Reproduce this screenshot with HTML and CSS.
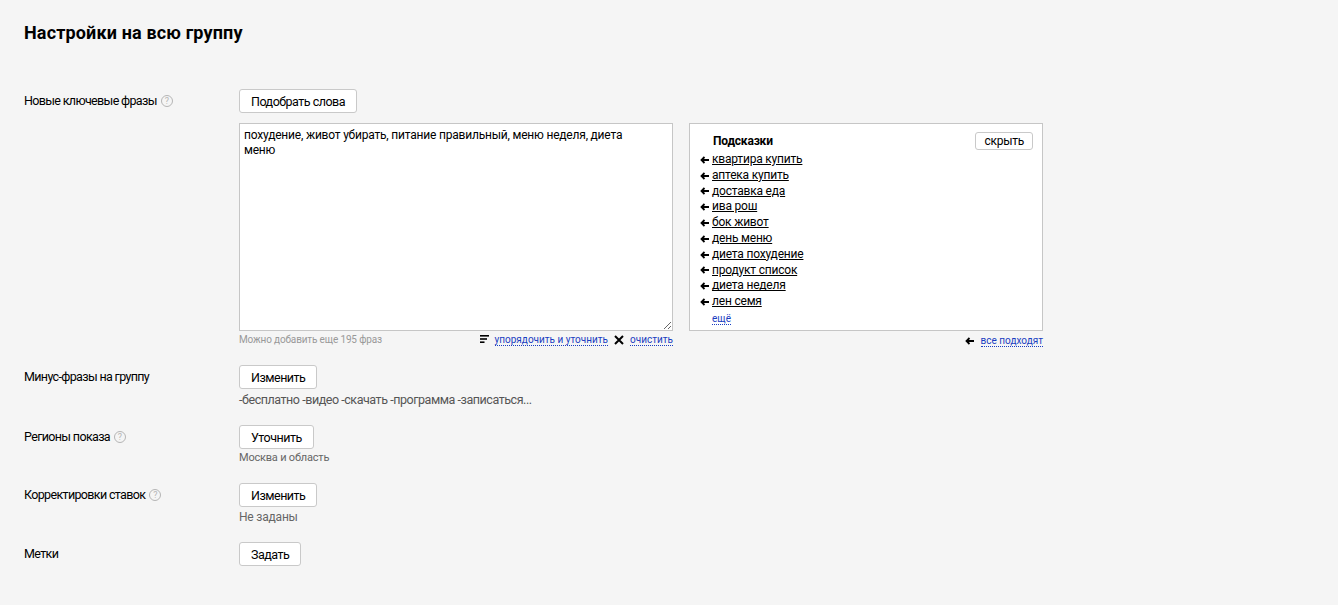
FILE: index.html
```html
<!DOCTYPE html>
<html lang="ru">
<head>
<meta charset="utf-8">
<title>Настройки на всю группу</title>
<link rel="stylesheet" href="styles.css">
</head>
<body>
<div class="page">
  <h1 class="title">Настройки на всю группу</h1>
  <div class="form">
    <div class="row">
      <div class="label">Новые ключевые фразы <span class="help">?</span></div>
      <div class="control">
        <button class="btn">Подобрать слова</button>
        <div class="editor">
          <div class="phrases">
            <textarea class="area">похудение, живот убирать, питание правильный, меню неделя, диета
меню</textarea>
            <div class="area-foot">
              <span class="muted">Можно добавить еще 195 фраз</span>
              <span class="actions">
                <svg class="ico" width="9" height="9" viewBox="0 0 9 9"><rect x="0" y="0" width="9" height="1.6" fill="#000"/><rect x="0" y="3.2" width="7" height="1.6" fill="#000"/><rect x="0" y="6.4" width="4.5" height="1.6" fill="#000"/></svg>
                <a class="pseudo">упорядочить и уточнить</a>
                <svg class="ico x" width="10" height="10" viewBox="0 0 10 10"><path d="M1 1L9 9M9 1L1 9" stroke="#000" stroke-width="2"/></svg>
                <a class="pseudo">очистить</a>
              </span>
            </div>
          </div>
          <div class="hints-col">
            <div class="hints">
              <div class="hints-head">
                <span class="hints-title">Подсказки</span>
                <button class="btn small">скрыть</button>
              </div>
              <ul class="hint-list">
                <li><svg class="arr" width="9" height="8" viewBox="0 0 9 8"><path d="M9 4H2M4.5 1L1.5 4L4.5 7" stroke="#000" stroke-width="1.8" fill="none"/></svg><a>квартира купить</a></li>
                <li><svg class="arr" width="9" height="8" viewBox="0 0 9 8"><path d="M9 4H2M4.5 1L1.5 4L4.5 7" stroke="#000" stroke-width="1.8" fill="none"/></svg><a>аптека купить</a></li>
                <li><svg class="arr" width="9" height="8" viewBox="0 0 9 8"><path d="M9 4H2M4.5 1L1.5 4L4.5 7" stroke="#000" stroke-width="1.8" fill="none"/></svg><a>доставка еда</a></li>
                <li><svg class="arr" width="9" height="8" viewBox="0 0 9 8"><path d="M9 4H2M4.5 1L1.5 4L4.5 7" stroke="#000" stroke-width="1.8" fill="none"/></svg><a>ива рош</a></li>
                <li><svg class="arr" width="9" height="8" viewBox="0 0 9 8"><path d="M9 4H2M4.5 1L1.5 4L4.5 7" stroke="#000" stroke-width="1.8" fill="none"/></svg><a>бок живот</a></li>
                <li><svg class="arr" width="9" height="8" viewBox="0 0 9 8"><path d="M9 4H2M4.5 1L1.5 4L4.5 7" stroke="#000" stroke-width="1.8" fill="none"/></svg><a>день меню</a></li>
                <li><svg class="arr" width="9" height="8" viewBox="0 0 9 8"><path d="M9 4H2M4.5 1L1.5 4L4.5 7" stroke="#000" stroke-width="1.8" fill="none"/></svg><a>диета похудение</a></li>
                <li><svg class="arr" width="9" height="8" viewBox="0 0 9 8"><path d="M9 4H2M4.5 1L1.5 4L4.5 7" stroke="#000" stroke-width="1.8" fill="none"/></svg><a>продукт список</a></li>
                <li><svg class="arr" width="9" height="8" viewBox="0 0 9 8"><path d="M9 4H2M4.5 1L1.5 4L4.5 7" stroke="#000" stroke-width="1.8" fill="none"/></svg><a>диета неделя</a></li>
                <li><svg class="arr" width="9" height="8" viewBox="0 0 9 8"><path d="M9 4H2M4.5 1L1.5 4L4.5 7" stroke="#000" stroke-width="1.8" fill="none"/></svg><a>лен семя</a></li>
              </ul>
              <a class="pseudo more">ещё</a>
            </div>
            <div class="hints-foot">
              <svg class="ico" width="9" height="8" viewBox="0 0 9 8"><path d="M9 4H2M4.5 1L1.5 4L4.5 7" stroke="#000" stroke-width="1.8" fill="none"/></svg>
              <a class="pseudo">все подходят</a>
            </div>
          </div>
        </div>
      </div>
    </div>

    <div class="row">
      <div class="label">Минус-фразы на группу</div>
      <div class="control">
        <button class="btn">Изменить</button>
        <div class="desc d13">-бесплатно -видео -скачать -программа -записаться...</div>
      </div>
    </div>

    <div class="row">
      <div class="label">Регионы показа <span class="help">?</span></div>
      <div class="control">
        <button class="btn">Уточнить</button>
        <div class="desc d11">Москва и область</div>
      </div>
    </div>

    <div class="row">
      <div class="label">Корректировки ставок <span class="help">?</span></div>
      <div class="control">
        <button class="btn">Изменить</button>
        <div class="desc d12">Не заданы</div>
      </div>
    </div>

    <div class="row">
      <div class="label">Метки</div>
      <div class="control">
        <button class="btn">Задать</button>
      </div>
    </div>
  </div>
</div>
</body>
</html>
```

FILE: styles.css
```css
* { box-sizing: border-box; }
html, body {
  margin: 0;
  background: #f5f5f5;
}
body {
  font-family: Roboto, "Liberation Sans", Arial, sans-serif;
  font-size: 13px;
  color: #000;
}
.page {
  padding: 22px 0 0 24px;
}
.title {
  margin: 0;
  font-size: 18px;
  line-height: 22px;
  font-weight: 700;
  letter-spacing: 0.15px;
}
.form {
  margin-top: 45px;
  display: flex;
  flex-direction: column;
  gap: 18px;
}
.row {
  display: grid;
  grid-template-columns: 215px auto;
  align-items: start;
}
.label {
  line-height: 24px;
  font-size: 12.5px;
  letter-spacing: -0.65px;
  display: flex;
  align-items: center;
  gap: 4px;
}
.help {
  display: inline-flex;
  width: 12px;
  height: 12px;
  border: 1px solid #b5b5b5;
  border-radius: 50%;
  color: #b5b5b5;
  font-size: 9px;
  line-height: 1;
  align-items: center;
  justify-content: center;
  letter-spacing: 0;
}
.control {
  display: flex;
  flex-direction: column;
  align-items: flex-start;
}
.btn {
  height: 24px;
  padding: 0 11px;
  background: #fff;
  border: 1px solid #c9c9c9;
  border-radius: 3px;
  font-family: inherit;
  font-size: 12.5px;
  letter-spacing: -0.5px;
  color: #000;
}
.btn.small {
  height: 18px;
  padding: 0 8px;
  font-size: 12px;
  letter-spacing: -0.25px;
}
.editor {
  margin-top: 10px;
  display: flex;
  gap: 16px;
}
.phrases {
  width: 434px;
}
.area {
  display: block;
  width: 434px;
  height: 208px;
  border: 1px solid #c6c6c6;
  background: #fff;
  padding: 4px 4px;
  font-family: inherit;
  font-size: 12px;
  letter-spacing: -0.2px;
  line-height: 15px;
  color: #000;
  resize: vertical;
  outline: none;
}
.area-foot {
  display: flex;
  justify-content: space-between;
  align-items: center;
  margin-top: 2px;
  line-height: 13px;
  font-size: 10px;
}
.muted { color: #999; letter-spacing: -0.15px; }
.actions {
  display: flex;
  align-items: center;
  gap: 6px;
}
.ico { display: block; }
.pseudo {
  color: #1a3dc1;
  text-decoration: none;
  border-bottom: 1px dotted #1a3dc1;
  line-height: 11px;
  font-size: 10px;
}
.hints-col {
  width: 354px;
}
.hints {
  height: 208px;
  border: 1px solid #c6c6c6;
  background: #fff;
  padding: 8px 9px 0 10px;
}
.hints-head {
  display: flex;
  justify-content: space-between;
  align-items: center;
  padding-left: 13px;
  height: 18px;
}
.hints-title {
  font-weight: 700;
  font-size: 12px;
  letter-spacing: -0.2px;
}
.hint-list {
  list-style: none;
  margin: 2px 0 0;
  padding: 0;
}
.hint-list li {
  display: flex;
  align-items: center;
  line-height: 15.8px;
  font-size: 12px;
  letter-spacing: -0.2px;
}
.arr {
  display: block;
  margin-right: 3px;
  flex: none;
}
.hint-list a {
  color: #000;
  text-decoration: underline;
}
.more {
  display: inline-block;
  margin-left: 12px;
}
.hints-foot {
  display: flex;
  justify-content: flex-end;
  align-items: center;
  gap: 7px;
  margin-top: 4px;
}
.desc { color: #555; letter-spacing: -0.2px; }
.d13 { font-size: 12.5px; line-height: 15px; margin-top: 3px; letter-spacing: -0.45px; }
.d11 { font-size: 11px; line-height: 14px; margin-top: 2px; color: #666; }
.d12 { font-size: 12px; line-height: 14px; margin-top: 3px; color: #666; }
```
